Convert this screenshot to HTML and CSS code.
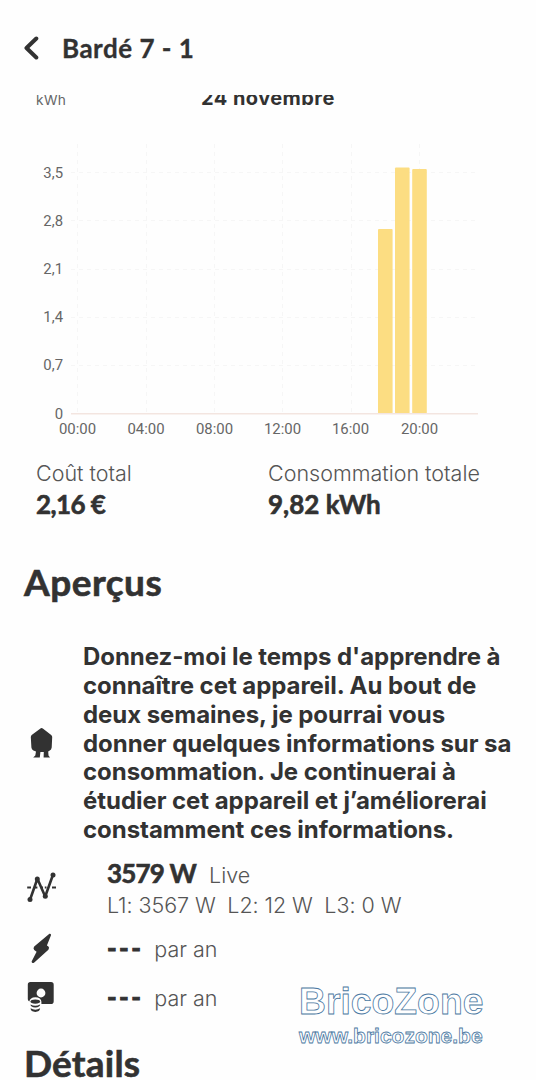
FILE: index.html
```html
<!DOCTYPE html>
<html lang="fr">
  <head>
    <meta charset="UTF-8" />
    <meta name="viewport" content="width=device-width, initial-scale=1.0" />
    <title>Bardé 7 - 1</title>
    <link rel="stylesheet" href="styles.css">
  </head>
  <body>
    <div class="app">
      <header class="header">
        <svg class="back" width="16" height="24" viewBox="0 0 16 24">
          <path d="M12.3 2.5 L2.5 12 L12.3 21.5" />
        </svg>
        <h1>Bardé 7 - 1</h1>
      </header>

      <main class="content">
        <div class="chart-header">
          <span class="unit">kWh</span>
          <span class="date">24 novembre</span>
        </div>

        <!-- Consommation par heure -->
        <svg class="chart" width="536" height="304" viewBox="0 136 536 304">
          <g class="grid">
            <path d="M71 172.5H478M71 220.5H478M71 269.5H478M71 317.5H478M71 365.5H478" />
            <path d="M77.5 144V413M146.5 144V413M214.5 144V413M282.5 144V413M351.5 144V413M419.5 144V413" />
          </g>
          <g class="bars">
            <rect x="378" y="229" width="14.6" height="184.5" rx="1" />
            <rect x="395" y="167.5" width="14.6" height="246" rx="1" />
            <rect x="412.2" y="169" width="14.6" height="244.5" rx="1" />
          </g>
          <path class="axis" d="M71 413.7H478" />
          <g class="labels-y">
            <text x="63" y="177.5">3,5</text>
            <text x="63" y="225.7">2,8</text>
            <text x="63" y="273.7">2,1</text>
            <text x="63" y="322.2">1,4</text>
            <text x="63" y="370.4">0,7</text>
            <text x="63" y="418.5">0</text>
          </g>
          <g class="labels-x">
            <text x="77.5" y="434">00:00</text>
            <text x="146" y="434">04:00</text>
            <text x="214.5" y="434">08:00</text>
            <text x="282.5" y="434">12:00</text>
            <text x="350.5" y="434">16:00</text>
            <text x="419.5" y="434">20:00</text>
          </g>
        </svg>

        <div class="totals">
          <div class="total">
            <span class="label">Coût total</span>
            <strong class="cost">2,16 €</strong>
          </div>
          <div class="total">
            <span class="label">Consommation totale</span>
            <strong>9,82 kWh</strong>
          </div>
        </div>

        <h2 class="insights-title">Aperçus</h2>

        <div class="message">
          <svg class="icon" width="32" height="32" viewBox="0 0 32 32">
            <path d="M15.8 .3 Q16.8 -.2 17.8 .5 L26.2 6.9 Q27.2 7.8 27.2 9 L26.7 19.6 Q26.5 21.9 24.4 22.7 L23.2 23.6 L23.5 27.5 L25 29.6 H18.6 L18.8 24 H15.4 L14.8 29.6 H8.2 L10.3 27.5 L11 23.6 L8.4 22.6 Q6.6 21.8 6.4 19.6 L5.8 9 Q5.8 7.6 7 6.8 Z" />
          </svg>
          <p>
            Donnez-moi le temps d'apprendre à<br />
            connaître cet appareil. Au bout de<br />
            deux semaines, je pourrai vous<br />
            donner quelques informations sur sa<br />
            consommation. Je continuerai à<br />
            étudier cet appareil et j’améliorerai<br />
            constamment ces informations.
          </p>
        </div>

        <div class="row row-live">
          <svg class="icon line" width="32" height="32" viewBox="0 0 32 32">
            <path d="M2.2 15.5H6M9.8 15.5H12.4M15.8 15.5H18M19.8 15.5H21.5M27 15.5H31" stroke-width="2" />
            <path d="M5 27.8L12.4 6.8L20.2 24.5L28 2.8" stroke-width="2.6" />
            <circle cx="5" cy="27.6" r="2.5" />
            <circle cx="12.3" cy="7" r="2.5" />
            <circle cx="20.3" cy="24.3" r="2.5" />
            <circle cx="28" cy="3" r="2.5" />
          </svg>
          <div class="values">
            <div class="live"><strong>3579 W</strong><span>Live</span></div>
            <div class="phases"><span>L1: 3567 W</span><span>L2: 12 W</span><span>L3: 0 W</span></div>
          </div>
        </div>

        <div class="row">
          <svg class="icon" width="32" height="32" viewBox="0 0 32 32">
            <path d="M24.4 .8 Q26.4 .4 26 2.3 L21.9 12.6 L23.2 13.2 Q24.9 14.6 23.4 16.8 L9 29.8 Q6.8 30.8 6.6 28.5 L11.6 18.8 L9.2 17.1 Q7.8 15.5 9.2 13.6 Z" />
          </svg>
          <div class="year"><strong>---</strong><span>par an</span></div>
        </div>

        <div class="row">
          <svg class="icon" width="32" height="32" viewBox="0 0 32 32">
            <path fill-rule="evenodd" d="M5.4 0 H26 Q28.7 0 28.7 2.8 V19.2 Q28.7 22 26 22 H16.4 V19.8 Q16.2 15.4 10.3 15.2 Q5 15.4 4.3 19.4 Q2.8 18.8 2.8 17.2 V2.8 Q2.8 0 5.4 0 Z M16 6.6 A4.4 4.4 0 1 0 16 15.4 A4.4 4.4 0 1 0 16 6.6 Z" />
            <ellipse cx="10.3" cy="19.6" rx="4.8" ry="2.1" />
            <path d="M5.5 22.4 Q10.3 25.2 15.1 22.4 Q15.1 25 10.3 25.4 Q5.5 25 5.5 22.4Z M5.5 26.3 Q10.3 29 15.1 26.3 Q14.9 29.8 10.3 29.9 Q5.7 29.8 5.5 26.3Z" />
          </svg>
          <div class="year"><strong>---</strong><span>par an</span></div>
        </div>

        <h2 class="details-title">Détails</h2>
      </main>

      <div class="watermark">
        <div class="brand">BricoZone</div>
        <div class="site">www.bricozone.be</div>
      </div>
    </div>
  </body>
</html>
```

FILE: styles.css
```css
* {
  box-sizing: border-box;
}

body {
  margin: 0;
  background-color: #fefefe;
  color: #323232;
  font-family: "Inter", "Liberation Sans", sans-serif;
}

.app {
  position: relative;
  height: 1080px;
  display: flex;
  flex-direction: column;
  overflow: hidden;
}

h1,
h2,
strong {
  font-family: "Lato", sans-serif;
  font-weight: 700;
}

/* Header styles */
.header {
  height: 95px;
  flex: none;
  display: flex;
  align-items: center;
  gap: 22px;
  padding: 0 24px;
}

.back {
  fill: none;
  stroke: #323232;
  stroke-width: 4;
  stroke-linecap: round;
  stroke-linejoin: round;
}

h1 {
  margin: 0;
  font-size: 26px;
  line-height: 32px;
  letter-spacing: 0.5px;
  -webkit-text-stroke: 0.3px #323232;
}

.content {
  flex: 1;
  min-height: 0;
  overflow: hidden;
}

/* Chart styles */
.chart-header {
  height: 41px;
  display: flex;
  align-items: flex-start;
  padding-left: 36px;
}

.unit {
  width: 165px;
  margin-top: -3px;
  font-size: 13.7px;
  line-height: 16px;
  letter-spacing: 0.4px;
  color: #666666;
}

.date {
  margin-top: -9px;
  font-size: 20px;
  line-height: 24px;
  font-weight: 700;
  letter-spacing: 0.45px;
}

.chart {
  display: block;
}

.chart text {
  font-family: "Roboto", sans-serif;
  font-size: 14.9px;
  fill: #666666;
}

.grid path {
  fill: none;
  stroke: #f6f6f6;
  stroke-dasharray: 4 4;
}

.bars rect {
  fill: #fcdd82;
}

.axis {
  stroke: #f3e5e0;
  stroke-width: 1.5;
}

.labels-y {
  text-anchor: end;
}

.labels-x {
  text-anchor: middle;
}

/* Totals */
.totals {
  display: grid;
  grid-template-columns: 232px 1fr;
  padding: 18px 0 0 36px;
}

.total {
  display: flex;
  flex-direction: column;
}

.label {
  font-size: 21.5px;
  line-height: 30px;
  font-weight: 300;
  color: #555555;
}

.total strong {
  font-size: 26px;
  line-height: 32px;
  -webkit-text-stroke: 0.6px #323232;
}

.total .cost {
  letter-spacing: -0.6px;
}

h2 {
  margin: 0 0 0 24px;
  font-size: 37px;
  line-height: 44px;
  letter-spacing: 0.5px;
  -webkit-text-stroke: 0.6px #323232;
}

.insights-title {
  margin-top: 40px;
}

/* Insights */
.message {
  display: flex;
  align-items: center;
  margin-top: 39px;
  padding-left: 25px;
}

.message p {
  margin: 0 0 0 26px;
  font-size: 24px;
  line-height: 28.85px;
  font-weight: 700;
  letter-spacing: -0.05px;
  white-space: nowrap;
}

.icon {
  flex: none;
  fill: #323232;
}

.line path {
  fill: none;
  stroke: #323232;
  stroke-linejoin: round;
}

.row {
  height: 49px;
  display: flex;
  align-items: center;
  padding-left: 25px;
}

.row-live {
  height: 80px;
  padding-top: 7px;
}

.values,
.year {
  margin-left: 50px;
}

.row span {
  font-size: 21.5px;
  font-weight: 300;
  color: #555555;
}

.row strong {
  font-size: 26px;
  -webkit-text-stroke: 0.6px #323232;
}

.live,
.year {
  display: flex;
  align-items: baseline;
  gap: 13px;
}

.live {
  line-height: 32px;
  padding-top: 1px;
}

.live strong {
  letter-spacing: -0.8px;
}

.phases {
  display: flex;
  gap: 11.5px;
  line-height: 29px;
  letter-spacing: -0.05px;
}

.year {
  margin-bottom: 4px;
}

.year strong {
  position: relative;
  top: 1px;
  letter-spacing: 2.4px;
  -webkit-text-stroke-width: 0.9px;
}

.year span {
  margin-left: -2px;
}

.details-title {
  margin-top: 18px;
  letter-spacing: 0.2px;
}

/* Outlined watermark over the lower right corner */
.watermark {
  position: absolute;
  left: 299px;
  top: 980px;
  font-family: "Liberation Sans", sans-serif;
  font-weight: 700;
  color: #ffffff;
  -webkit-text-stroke: 0.8px #4a78a2;
}

.brand {
  font-size: 37.3px;
  line-height: 43px;
}

.site {
  font-size: 21px;
  line-height: 26px;
}
```
